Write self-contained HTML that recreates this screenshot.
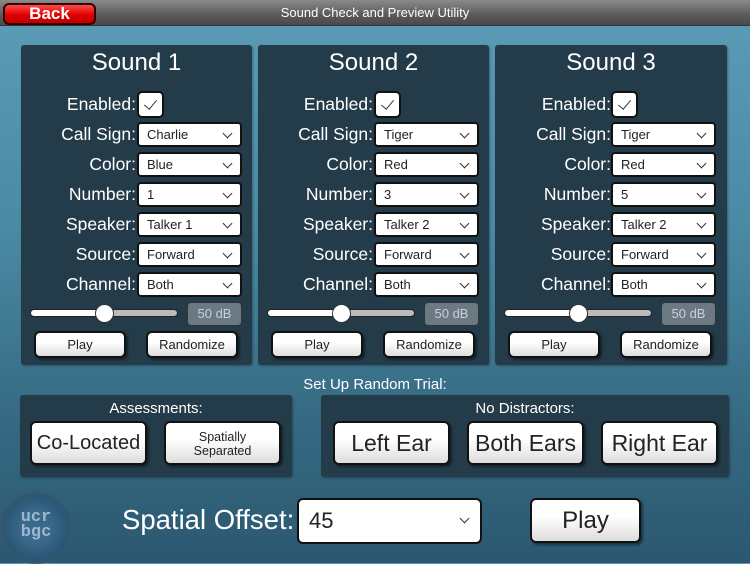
<!DOCTYPE html>
<html><head><style>
*{box-sizing:border-box;margin:0;padding:0}
body{width:750px;height:563px;overflow:hidden;font-family:"Liberation Sans",sans-serif;background:linear-gradient(#5c9cb6 0%,#4b8aa4 40%,#356a82 75%,#2b5870 100%);position:relative}
.top{position:absolute;left:0;top:0;width:750px;height:26px;background:linear-gradient(#8a8a8a,#5a5a5a 60%,#4a4a4a);border-bottom:1px solid #333;color:#fff;font-size:13px;text-align:center;line-height:26px}
.back{position:absolute;left:3px;top:3px;width:93px;height:22px;border-radius:6px;background:linear-gradient(#ff4a4a,#e00000 55%,#c00000);border:2px solid #300;color:#fff;font-weight:bold;font-size:17px;line-height:18px;text-align:center}
.p{position:absolute;background:#243c4a;border-radius:3px;box-shadow:1px 1px 2px rgba(0,0,0,.3)}
.t{position:absolute;left:0;right:0;top:4px;text-align:center;color:#fff;font-size:24px}
.l{position:absolute;right:116px;width:120px;text-align:right;color:#fff;font-size:17.5px;line-height:24px}
.s{position:absolute;left:116px;width:105px;height:25px;background:#fff;border:2px solid #111;border-radius:4px;font-size:13px;line-height:21px;padding-left:8px;color:#222}
.s:after{content:"";position:absolute;right:9px;top:6px;width:6px;height:6px;border-right:1.6px solid #333;border-bottom:1.6px solid #333;transform:rotate(45deg)}
.big:after{top:15px;right:12px}
.cb{position:absolute;left:116px;top:46px;width:27px;height:27px;background:#fff;border:2px solid #111;border-radius:5px}
.cb:after{content:"";position:absolute;left:8px;top:4px;width:6px;height:11px;border-right:1.6px solid #333;border-bottom:1.6px solid #333;transform:rotate(40deg)}
.tr{position:absolute;left:9px;top:264px;width:148px;height:8px;border-radius:4px;background:linear-gradient(90deg,#fff 50%,#bbb 50%);border:1px solid #222}
.th{position:absolute;top:259px;width:19px;height:19px;border-radius:50%;background:#fff;border:1px solid #333}
.db{position:absolute;left:166px;top:257px;width:55px;height:24px;background:#6b7a82;border:1px solid #333;border-radius:4px;color:#ccd;font-size:13px;text-align:center;line-height:22px}
.b{position:absolute;background:linear-gradient(#fff 40%,#ddd);border:2px solid #111;border-radius:6px;color:#222;text-align:center;box-shadow:2px 2px 2px rgba(0,0,0,.45)}
.sm{top:286px;height:27px;width:92px;font-size:13px;line-height:23px}
</style></head><body>
<div class="top">Sound Check and Preview Utility</div>
<div class="back">Back</div>

<div class="p" style="left:21px;top:45px;width:231px;height:320px">
<div class="t">Sound 1</div>
<div class="l" style="top:47px">Enabled:</div><div class="cb"></div>
<div class="l" style="top:77px">Call Sign:</div><div class="s" style="top:77px">Charlie</div>
<div class="l" style="top:107px">Color:</div><div class="s" style="top:107px">Blue</div>
<div class="l" style="top:137px">Number:</div><div class="s" style="top:137px">1</div>
<div class="l" style="top:167px">Speaker:</div><div class="s" style="top:167px">Talker 1</div>
<div class="l" style="top:197px">Source:</div><div class="s" style="top:197px">Forward</div>
<div class="l" style="top:227px">Channel:</div><div class="s" style="top:227px">Both</div>
<div class="tr"></div><div class="th" style="left:74px"></div><div class="db">50 dB</div>
<div class="b sm" style="left:13px">Play</div><div class="b sm" style="left:125px">Randomize</div>
</div>

<div class="p" style="left:258px;top:45px;width:231px;height:320px">
<div class="t">Sound 2</div>
<div class="l" style="top:47px">Enabled:</div><div class="cb"></div>
<div class="l" style="top:77px">Call Sign:</div><div class="s" style="top:77px">Tiger</div>
<div class="l" style="top:107px">Color:</div><div class="s" style="top:107px">Red</div>
<div class="l" style="top:137px">Number:</div><div class="s" style="top:137px">3</div>
<div class="l" style="top:167px">Speaker:</div><div class="s" style="top:167px">Talker 2</div>
<div class="l" style="top:197px">Source:</div><div class="s" style="top:197px">Forward</div>
<div class="l" style="top:227px">Channel:</div><div class="s" style="top:227px">Both</div>
<div class="tr"></div><div class="th" style="left:74px"></div><div class="db">50 dB</div>
<div class="b sm" style="left:13px">Play</div><div class="b sm" style="left:125px">Randomize</div>
</div>

<div class="p" style="left:495px;top:45px;width:232px;height:320px">
<div class="t">Sound 3</div>
<div class="l" style="top:47px">Enabled:</div><div class="cb"></div>
<div class="l" style="top:77px">Call Sign:</div><div class="s" style="top:77px">Tiger</div>
<div class="l" style="top:107px">Color:</div><div class="s" style="top:107px">Red</div>
<div class="l" style="top:137px">Number:</div><div class="s" style="top:137px">5</div>
<div class="l" style="top:167px">Speaker:</div><div class="s" style="top:167px">Talker 2</div>
<div class="l" style="top:197px">Source:</div><div class="s" style="top:197px">Forward</div>
<div class="l" style="top:227px">Channel:</div><div class="s" style="top:227px">Both</div>
<div class="tr"></div><div class="th" style="left:74px"></div><div class="db">50 dB</div>
<div class="b sm" style="left:13px">Play</div><div class="b sm" style="left:125px">Randomize</div>
</div>

<div style="position:absolute;left:0;width:750px;top:376px;text-align:center;color:#fff;font-size:15px">Set Up Random Trial:</div>

<div class="p" style="left:20px;top:395px;width:272px;height:82px">
<div style="position:absolute;left:0;right:0;top:5px;text-align:center;color:#fff;font-size:15px">Assessments:</div>
<div class="b" style="left:10px;top:26px;width:117px;height:44px;font-size:20px;line-height:40px">Co-Located</div>
<div class="b" style="left:144px;top:26px;width:117px;height:44px;font-size:12.5px;line-height:14px;padding-top:7px">Spatially<br>Separated</div>
</div>

<div class="p" style="left:321px;top:395px;width:408px;height:82px">
<div style="position:absolute;left:0;right:0;top:5px;text-align:center;color:#fff;font-size:15px">No Distractors:</div>
<div class="b" style="left:12px;top:26px;width:117px;height:44px;font-size:23px;line-height:40px">Left Ear</div>
<div class="b" style="left:146px;top:26px;width:117px;height:44px;font-size:23px;line-height:40px">Both Ears</div>
<div class="b" style="left:280px;top:26px;width:117px;height:44px;font-size:23px;line-height:40px">Right Ear</div>
</div>

<div style="position:absolute;left:0;top:492px;width:72px;height:72px;border-radius:50%;background:radial-gradient(#3d6c90 30%,#2d5877 60%,#2a5068);border:1px solid #456;opacity:.85"></div>
<div style="position:absolute;left:14px;top:510px;width:44px;color:#9bb8d0;font-weight:bold;font-size:17px;line-height:15px;text-align:center;font-family:'Liberation Mono',monospace">ucr<br>bgc</div>

<div style="position:absolute;left:122px;top:504px;color:#fff;font-size:27.5px">Spatial Offset:</div>
<div class="s big" style="left:297px;top:498px;width:185px;height:46px;font-size:22px;line-height:42px;padding-left:10px;border-radius:6px">45</div>
<div class="b" style="left:530px;top:498px;width:111px;height:45px;font-size:24px;line-height:41px">Play</div>
</body></html>
